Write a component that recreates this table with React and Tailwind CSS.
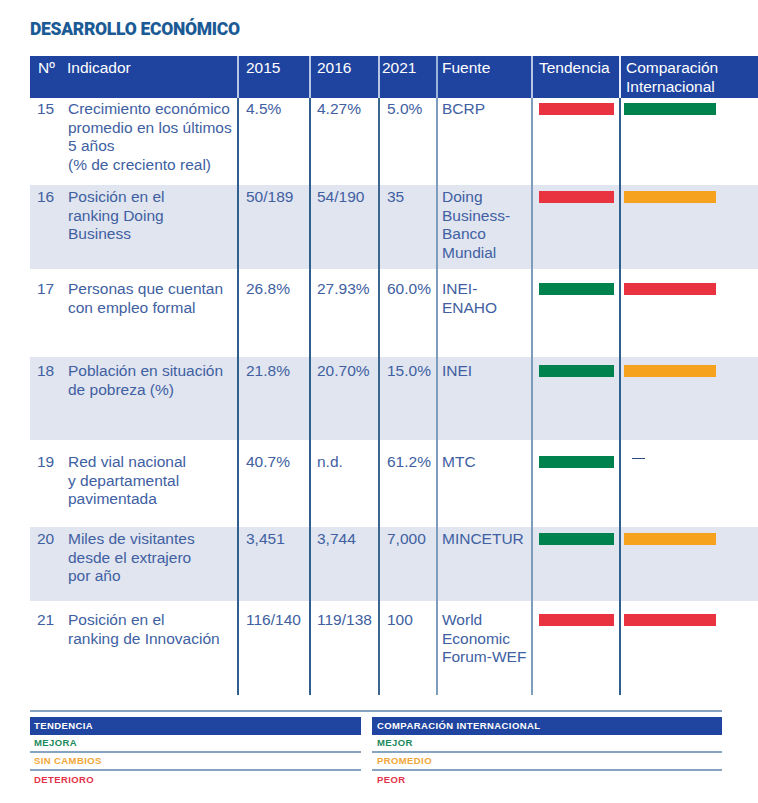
// Tabla "Desarrollo económico": indicadores + semáforo de tendencia y
// comparación internacional, con leyenda abajo.

const FONT = { fontFamily: '"Liberation Sans", Arial, sans-serif' };

const COLS = "grid-cols-[33px_174px_72px_69px_58px_95px_88px_103px]";

const BAR = {
  red: "bg-[#ea3341]",
  green: "bg-[#00824f]",
  orange: "bg-[#f6a21e]",
};

// h = alto de fila, pt = padding arriba (para que el texto caiga donde
// cae en el PDF original; las filas no son parejas)
const ROWS = [
  {
    n: "15", h: "h-[87px]", pt: "pt-[2px]", shade: false,
    ind: ["Crecimiento económico", "promedio en los últimos", "5 años", "(% de creciento real)"],
    y15: "4.5%", y16: "4.27%", y21: "5.0%", fuente: ["BCRP"],
    tend: "red", comp: "green",
  },
  {
    n: "16", h: "h-[84px]", pt: "pt-[3px]", shade: true,
    ind: ["Posición en el", "ranking Doing", "Business"],
    y15: "50/189", y16: "54/190", y21: "35", fuente: ["Doing", "Business-", "Banco", "Mundial"],
    tend: "red", comp: "orange",
  },
  {
    n: "17", h: "h-[88px]", pt: "pt-[11px]", shade: false,
    ind: ["Personas que cuentan", "con empleo formal"],
    y15: "26.8%", y16: "27.93%", y21: "60.0%", fuente: ["INEI-", "ENAHO"],
    tend: "green", comp: "red",
  },
  {
    n: "18", h: "h-[83px]", pt: "pt-[5px]", shade: true,
    ind: ["Población en situación", "de pobreza (%)"],
    y15: "21.8%", y16: "20.70%", y21: "15.0%", fuente: ["INEI"],
    tend: "green", comp: "orange",
  },
  {
    n: "19", h: "h-[87px]", pt: "pt-[13px]", shade: false,
    ind: ["Red vial nacional", "y departamental", "pavimentada"],
    y15: "40.7%", y16: "n.d.", y21: "61.2%", fuente: ["MTC"],
    tend: "green", comp: null,
  },
  {
    n: "20", h: "h-[74px]", pt: "pt-[3px]", shade: true,
    ind: ["Miles de visitantes", "desde el extrajero", "por año"],
    y15: "3,451", y16: "3,744", y21: "7,000", fuente: ["MINCETUR"],
    tend: "green", comp: "orange",
  },
  {
    n: "21", h: "h-[94px]", pt: "pt-[10px]", shade: false,
    ind: ["Posición en el", "ranking de Innovación"],
    y15: "116/140", y16: "119/138", y21: "100", fuente: ["World", "Economic", "Forum-WEF"],
    tend: "red", comp: "red",
  },
];

function Lines({ items }) {
  return items.map((t, i) => (
    <div key={i} className="whitespace-nowrap">{t}</div>
  ));
}

function Row({ r }) {
  const cell = `${r.pt} h-full`;
  return (
    <div className={`grid ${COLS} ${r.h} ${r.shade ? "bg-[#e1e5ef]" : "bg-white"} text-[15.5px] leading-[18.5px] text-[#4060a2]`}>
      <div className={`${cell} pl-[7px]`}>{r.n}</div>
      <div className={`${cell} pl-[5px]`}><Lines items={r.ind} /></div>
      <div className={`${cell} pl-[7px] border-l-2 border-[#2f5f8e]`}>{r.y15}</div>
      <div className={`${cell} pl-[6px] border-l-2 border-[#2f5f8e]`}>{r.y16}</div>
      <div className={`${cell} pl-[7px] border-l-2 border-[#3b6690]`}>{r.y21}</div>
      <div className={`${cell} pl-[4px] border-l-2 border-[#7e9dbd]`}><Lines items={r.fuente} /></div>
      <div className={`${cell} pl-[6px] border-l-2 border-[#7e9dbd]`}>
        <div className={`mt-[3px] w-[75px] h-[12px] ${BAR[r.tend]}`} />
      </div>
      <div className={`${cell} pl-[3px] border-l-2 border-[#2f5f8e]`}>
        {r.comp ? (
          <div className={`mt-[3px] w-[92px] h-[12px] ${BAR[r.comp]}`} />
        ) : (
          <div className="mt-[5px] ml-[8px] w-[13px] h-px bg-[#2a4a7c]" />
        )}
      </div>
    </div>
  );
}

function LegendCol({ title, items, pad, width }) {
  return (
    <div className={width}>
      <div className={`h-[18px] bg-[#1f45a0] text-white ${pad} flex items-center`}>{title}</div>
      {items.map(([label, color], i) => (
        <div
          key={label}
          className={`h-[18px] ${pad} flex items-center ${color} ${i < items.length - 1 ? "border-b-2 border-[#86a3c2]" : ""}`}
        >
          {label}
        </div>
      ))}
    </div>
  );
}

export default function App() {
  return (
    <div className="w-[758px] h-[803px] bg-white pl-[30px] pt-[19px]" style={FONT}>
      <h1
        className="text-[17.5px] leading-[20px] font-black text-[#1b5b95] tracking-[-0.3px]"
        style={{ fontFamily: 'Roboto, "Liberation Sans", sans-serif' }}
      >
        DESARROLLO ECONÓMICO
      </h1>

      {/* Cabecera */}
      <div className={`mt-[17px] grid ${COLS} h-[42px] bg-[#1f44a0] text-white text-[15.5px] leading-[18.5px]`}>
        <div className="pt-[3px] pl-[8px]">Nº</div>
        <div className="pt-[3px] pl-[4px]">Indicador</div>
        <div className="pt-[3px] pl-[7px] border-l-2 border-[#b8c6e6]">2015</div>
        <div className="pt-[3px] pl-[6px] border-l-2 border-[#b8c6e6]">2016</div>
        <div className="pt-[3px] pl-[2px] border-l-2 border-[#b8c6e6]">2021</div>
        <div className="pt-[3px] pl-[4px] border-l-2 border-[#9db4da]">Fuente</div>
        <div className="pt-[3px] pl-[6px] border-l-2 border-[#b8c6e6]">Tendencia</div>
        <div className="pt-[3px] pl-[5px] border-l-2 border-[#e6ecf7] whitespace-nowrap">
          Comparación<br />Internacional
        </div>
      </div>

      {ROWS.map((r) => (
        <Row key={r.n} r={r} />
      ))}

      {/* Leyenda */}
      <div className="mt-[15px] w-[692px] h-[2px] bg-[#86a3c2]" />
      <div className="mt-[5px] flex gap-[11px] text-[9.5px] font-bold tracking-[0.4px]">
        <LegendCol
          title="TENDENCIA"
          pad="pl-[4px]"
          width="w-[331px]"
          items={[
            ["MEJORA", "text-[#1b8a5c]"],
            ["SIN CAMBIOS", "text-[#f0a637]"],
            ["DETERIORO", "text-[#e2334a]"],
          ]}
        />
        <LegendCol
          title="COMPARACIÓN INTERNACIONAL"
          pad="pl-[5px]"
          width="w-[350px]"
          items={[
            ["MEJOR", "text-[#1b8a5c]"],
            ["PROMEDIO", "text-[#f0a637]"],
            ["PEOR", "text-[#e2334a]"],
          ]}
        />
      </div>
    </div>
  );
}
